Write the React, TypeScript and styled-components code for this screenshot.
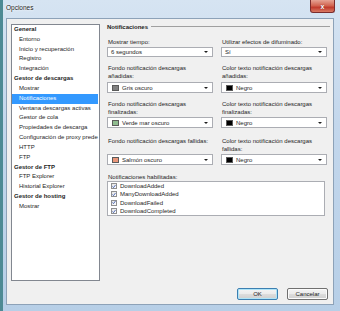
import React from "react";
import styled, { createGlobalStyle } from "styled-components";

const Global = createGlobalStyle`
  * { box-sizing: border-box; }
  html, body { margin: 0; padding: 0; background: #ffffff; }
  body { font-family: "Liberation Sans", Arial, sans-serif; font-size: 6px; color: #1e1e1e; }
`;

const Window = styled.div`
  width: 340px;
  height: 311px;
  display: flex;
  flex-direction: column;
  padding: 0 6px 6px 3px;
  background: linear-gradient(to bottom, #d6e4f2 0%, #c3d7ec 40%, #b7cfe7 100%);
  border-left: 3px solid #4d8a94;
  position: relative;
`;

const TitleBar = styled.div`
  height: 18px;
  display: flex;
  align-items: center;
  padding-left: 0px;
`;

const Title = styled.span`
  font-size: 6.5px;
  color: #1b1b1b;
  text-shadow: 0 0 3px #ffffff, 0 0 2px #ffffff;
  margin-top: -4px;
`;

const CloseBtn = styled.div`
  position: absolute;
  top: 0;
  right: 5px;
  width: 25px;
  height: 13px;
  border: 1px solid #7a2c2c;
  border-top: none;
  border-radius: 0 0 3px 3px;
  background: linear-gradient(to bottom, #e6a394 0%, #d0604c 50%, #c0392b 60%, #d97a63 100%);
  display: flex;
  align-items: center;
  justify-content: center;
  color: #ffffff;
  font-weight: bold;
  font-size: 7px;
  text-shadow: 0 0 1px #6a1a1a;
`;

const Client = styled.div`
  flex: 1;
  background: #f0f0f0;
  border: 1px solid #8da2b8;
  display: flex;
  flex-direction: column;
  padding: 5px 5px 4px 4px;
`;

const Main = styled.div`
  display: flex;
  align-items: flex-start;
  gap: 7px;
`;

const Tree = styled.div`
  width: 89px;
  height: 257px;
  background: #ffffff;
  border: 1px solid #828790;
  overflow: hidden;
`;

const TreeItem = styled.div<{ $group?: boolean; $selected?: boolean }>`
  height: 9.83px;
  line-height: 9.83px;
  white-space: nowrap;
  overflow: hidden;
  padding-left: ${(p) => (p.$group ? "2px" : "7px")};
  font-weight: ${(p) => (p.$group ? "bold" : "normal")};
  color: ${(p) => (p.$selected ? "#ffffff" : "#1e1e1e")};
  background: ${(p) => (p.$selected ? "#3399ff" : "transparent")};
  margin-right: ${(p) => (p.$selected ? "1px" : "0")};
`;

const Content = styled.div`
  width: 220px;
  display: flex;
  flex-direction: column;
  margin-top: -1px;
`;

const Heading = styled.div`
  display: flex;
  align-items: center;
  height: 7px;
  font-weight: bold;
  gap: 3px;
  &::after {
    content: "";
    flex: 1;
    height: 1px;
    background: #a0a0a0;
    margin-right: -3px;
  }
`;

const Grid = styled.div<{ $mt: number }>`
  display: grid;
  grid-template-columns: 106px 106px;
  column-gap: 8px;
  margin-top: ${(p) => p.$mt}px;
`;

const Field = styled.div`
  display: flex;
  flex-direction: column;
`;

const Label = styled.div<{ $gap: number }>`
  line-height: 8px;
  padding-left: 1px;
  margin-bottom: ${(p) => p.$gap}px;
`;

const Combo = styled.div<{ $h: number }>`
  margin-top: auto;
  height: ${(p) => p.$h}px;
  background: #ffffff;
  border: 1px solid #abadb3;
  display: flex;
  align-items: center;
  padding-left: 3px;
  position: relative;
  &::after {
    content: "";
    position: absolute;
    right: 4px;
    top: 50%;
    margin-top: -1px;
    border-left: 2px solid transparent;
    border-right: 2px solid transparent;
    border-top: 2.5px solid #1e1e1e;
  }
`;

const Swatch = styled.span<{ $c: string }>`
  width: 7px;
  height: 6px;
  border: 1px solid #5a5a5a;
  background: ${(p) => p.$c};
  margin-right: 3px;
  margin-left: 1px;
`;

const SectionLabel = styled.div`
  line-height: 8px;
  margin-top: 8px;
  padding-left: 1px;
`;

const ListBox = styled.div`
  width: 218px;
  height: 35px;
  background: #ffffff;
  border: 1px solid #abadb3;
  padding: 0 0 0 3px;
`;

const CheckRow = styled.div`
  height: 8.3px;
  display: flex;
  align-items: center;
  gap: 3px;
`;

const CheckBox = styled.span`
  width: 6px;
  height: 6px;
  border: 1px solid #8f8f8f;
  background: linear-gradient(135deg, #e4e4e4, #ffffff);
  display: flex;
  align-items: center;
  justify-content: center;
`;

const ButtonRow = styled.div`
  margin-top: auto;
  display: flex;
  justify-content: flex-end;
  gap: 9px;
`;

const Button = styled.div<{ $default?: boolean }>`
  width: 41px;
  height: 12px;
  border: 1px solid ${(p) => (p.$default ? "#3c7fb1" : "#707070")};
  border-radius: 2px;
  background: linear-gradient(to bottom, #f4f4f4 0%, #ebebeb 50%, #dddddd 51%, #cfcfcf 100%);
  display: flex;
  align-items: center;
  justify-content: center;
  box-shadow: inset 0 0 0 1px ${(p) => (p.$default ? "#aee4f8" : "#fcfcfc")};
`;

const Check = () => (
  <svg width="5" height="5" viewBox="0 0 5 5">
    <path d="M0.6 2.4 L1.9 3.9 L4.4 0.6" fill="none" stroke="#2f4fa8" strokeWidth="1" />
  </svg>
);

const tree: { t: string; g?: boolean; s?: boolean }[] = [
  { t: "General", g: true },
  { t: "Entorno" },
  { t: "Inicio y recuperación" },
  { t: "Registro" },
  { t: "Integración" },
  { t: "Gestor de descargas", g: true },
  { t: "Mostrar" },
  { t: "Notificaciones", s: true },
  { t: "Ventana descargas activas" },
  { t: "Gestor de cola" },
  { t: "Propiedades de descarga" },
  { t: "Configuración de proxy prede" },
  { t: "HTTP" },
  { t: "FTP" },
  { t: "Gestor de FTP", g: true },
  { t: "FTP Explorer" },
  { t: "Historial Explorer" },
  { t: "Gestor de hosting", g: true },
  { t: "Mostrar" },
];

const checks = ["DownloadAdded", "ManyDownloadAdded", "DownloadFailed", "DownloadCompleted"];

export default function App() {
  return (
    <>
      <Global />
      <Window>
        <TitleBar>
          <Title>Opciones</Title>
          <CloseBtn>x</CloseBtn>
        </TitleBar>
        <Client>
          <Main>
            <Tree>
              {tree.map((it, i) => (
                <TreeItem key={i} $group={it.g} $selected={it.s}>
                  {it.t}
                </TreeItem>
              ))}
            </Tree>
            <Content>
              <Heading>Notificaciones</Heading>
              <Grid $mt={8}>
                <Field>
                  <Label $gap={1}>Mostrar tiempo:</Label>
                  <Combo $h={10}>6 segundos</Combo>
                </Field>
                <Field>
                  <Label $gap={1}>Utilizar efectos de difuminado:</Label>
                  <Combo $h={10}>Sí</Combo>
                </Field>
              </Grid>
              <Grid $mt={7}>
                <Field>
                  <Label $gap={2}>Fondo notificación descargas<br />añadidas:</Label>
                  <Combo $h={11}><Swatch $c="#808080" />Gris oscuro</Combo>
                </Field>
                <Field>
                  <Label $gap={2}>Color texto notificación descargas<br />añadidas:</Label>
                  <Combo $h={11}><Swatch $c="#000000" />Negro</Combo>
                </Field>
              </Grid>
              <Grid $mt={7}>
                <Field>
                  <Label $gap={1}>Fondo notificación descargas<br />finalizadas:</Label>
                  <Combo $h={11}><Swatch $c="#8fbc8f" />Verde mar oscuro</Combo>
                </Field>
                <Field>
                  <Label $gap={1}>Color texto notificación descargas<br />finalizadas:</Label>
                  <Combo $h={11}><Swatch $c="#000000" />Negro</Combo>
                </Field>
              </Grid>
              <Grid $mt={9}>
                <Field>
                  <Label $gap={1}>Fondo notificación descargas fallidas:</Label>
                  <Combo $h={11}><Swatch $c="#e9967a" />Salmón oscuro</Combo>
                </Field>
                <Field>
                  <Label $gap={1}>Color texto notificación descargas<br />fallidas:</Label>
                  <Combo $h={11}><Swatch $c="#000000" />Negro</Combo>
                </Field>
              </Grid>
              <SectionLabel>Notificaciones habilitadas:</SectionLabel>
              <ListBox>
                {checks.map((c) => (
                  <CheckRow key={c}>
                    <CheckBox><Check /></CheckBox>
                    {c}
                  </CheckRow>
                ))}
              </ListBox>
            </Content>
          </Main>
          <ButtonRow>
            <Button $default>OK</Button>
            <Button>Cancelar</Button>
          </ButtonRow>
        </Client>
      </Window>
    </>
  );
}
